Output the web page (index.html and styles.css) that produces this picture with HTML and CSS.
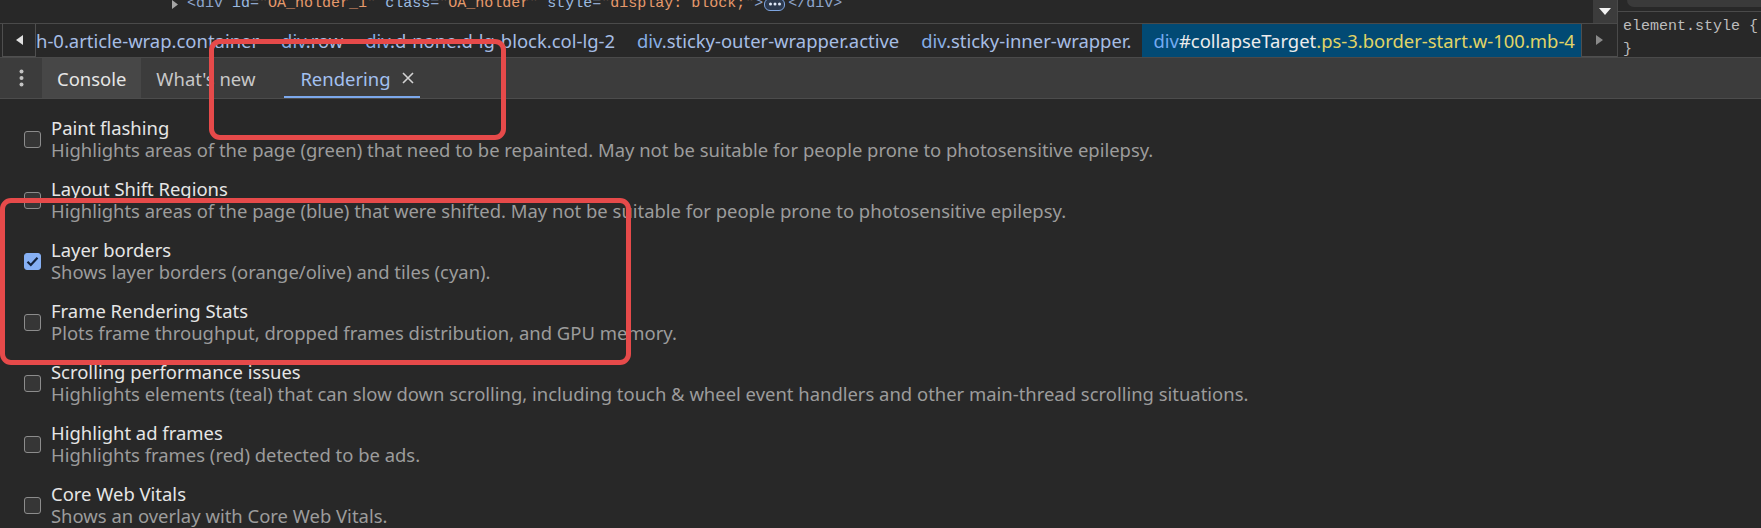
FILE: index.html
```html
<!DOCTYPE html>
<html>
<head>
<meta charset="utf-8">
<link rel="stylesheet" href="styles.css">
</head>
<body>
<div class="screen">
  <div class="top">
    <div class="elements">
      <div class="codeline">
        <div class="code">
          <svg class="tri" width="8" height="9" viewBox="0 0 8 9"><path d="M1 0 L7 4.5 L1 9 Z" fill="#a6a6a6"/></svg>
          <span class="tag">&lt;div</span>&nbsp;<span class="attr">id</span><span class="tag">=</span><span class="q">"</span><span class="val">OA_holder_1</span><span class="q">"</span>&nbsp;<span class="attr">class</span><span class="tag">=</span><span class="q">"</span><span class="val">OA_holder</span><span class="q">"</span>&nbsp;<span class="attr">style</span><span class="tag">=</span><span class="q">"</span><span class="val">display:&nbsp;block;</span><span class="q">"</span><span class="tag">&gt;</span><span class="badge"><svg width="14" height="6" viewBox="0 0 14 6"><circle cx="2.5" cy="3" r="1.5" fill="#dfe8f8"/><circle cx="7" cy="3" r="1.5" fill="#dfe8f8"/><circle cx="11.5" cy="3" r="1.5" fill="#dfe8f8"/></svg></span><span class="tag">&lt;/div&gt;</span>
        </div>
        <div class="dd"><svg width="12" height="8" viewBox="0 0 12 8"><path d="M0 0 L12 0 L6 7 Z" fill="#f2f2f2"/></svg></div>
      </div>
      <div class="crumbs">
        <div class="cbtn"><svg width="7" height="10" viewBox="0 0 7 10"><path d="M7 0 L0 5 L7 10 Z" fill="#e0e0e0"/></svg></div>
        <div class="clist">
          <span class="crumb first"><span class="cls">h-0.article-wrap.container</span></span>
          <span class="crumb"><span class="tn">div</span><span class="cls">.row</span></span>
          <span class="crumb"><span class="tn">div</span><span class="cls">.d-none.d-lg-block.col-lg-2</span></span>
          <span class="crumb"><span class="tn">div</span><span class="cls">.sticky-outer-wrapper.active</span></span>
          <span class="crumb"><span class="tn">div</span><span class="cls">.sticky-inner-wrapper.</span></span>
          <span class="crumb sel"><span class="tn">div</span><span class="id">#collapseTarget</span><span class="ycls">.ps-3.border-start.w-100.mb-4</span></span>
        </div>
        <div class="cbtn"><svg width="7" height="10" viewBox="0 0 7 10"><path d="M0 0 L7 5 L0 10 Z" fill="#8a8a8a"/></svg></div>
      </div>
    </div>
    <div class="styles">
      <div class="filter-row"><div class="filter"></div></div>
      <div class="rule"><div>element.style {</div><div>}</div></div>
    </div>
  </div>

  <div class="tabbar">
    <div class="kebab"><svg width="5" height="18" viewBox="0 0 5 18"><circle cx="2.5" cy="2.5" r="2" fill="#c4c4c4"/><circle cx="2.5" cy="9" r="2" fill="#c4c4c4"/><circle cx="2.5" cy="15.5" r="2" fill="#c4c4c4"/></svg></div>
    <div class="tab hover">Console</div>
    <div class="tab closable"><span>What's new</span><span class="xspace"></span></div>
    <div class="tab closable active"><span>Rendering</span><svg class="x" width="14" height="14" viewBox="0 0 14 14"><path d="M2 2 L12 12 M12 2 L2 12" stroke="#d2d2d2" stroke-width="1.6"/></svg></div>
  </div>

  <div class="content">
    <div class="row">
      <span class="cb"></span>
      <div class="txt"><div class="title">Paint flashing</div><div class="desc">Highlights areas of the page (green) that need to be repainted. May not be suitable for people prone to photosensitive epilepsy.</div></div>
    </div>
    <div class="row">
      <span class="cb"></span>
      <div class="txt"><div class="title">Layout Shift Regions</div><div class="desc">Highlights areas of the page (blue) that were shifted. May not be suitable for people prone to photosensitive epilepsy.</div></div>
    </div>
    <div class="row">
      <span class="cb checked"><svg width="13" height="11" viewBox="0 0 13 11"><path d="M1.5 5.8 L4.8 9 L11.5 1.8" fill="none" stroke="#13233d" stroke-width="2.2"/></svg></span>
      <div class="txt"><div class="title">Layer borders</div><div class="desc">Shows layer borders (orange/olive) and tiles (cyan).</div></div>
    </div>
    <div class="row">
      <span class="cb"></span>
      <div class="txt"><div class="title">Frame Rendering Stats</div><div class="desc">Plots frame throughput, dropped frames distribution, and GPU memory.</div></div>
    </div>
    <div class="row">
      <span class="cb"></span>
      <div class="txt"><div class="title">Scrolling performance issues</div><div class="desc">Highlights elements (teal) that can slow down scrolling, including touch &amp; wheel event handlers and other main-thread scrolling situations.</div></div>
    </div>
    <div class="row">
      <span class="cb"></span>
      <div class="txt"><div class="title">Highlight ad frames</div><div class="desc">Highlights frames (red) detected to be ads.</div></div>
    </div>
    <div class="row">
      <span class="cb"></span>
      <div class="txt"><div class="title">Core Web Vitals</div><div class="desc">Shows an overlay with Core Web Vitals.</div></div>
    </div>
  </div>

  <div class="mark mark1"></div>
  <div class="mark mark2"></div>
</div>
</body>
</html>
```

FILE: styles.css
```css
* { box-sizing: border-box; }
html, body { margin: 0; padding: 0; }
body {
  background: #282828;
  font-family: "Noto Sans", "Liberation Sans", sans-serif;
  font-size: 18.45px;
  color: #e3e3e3;
}
.screen {
  position: relative;
  width: 1761px;
  height: 528px;
  overflow: hidden;
  background: #282828;
}

/* ---------- top (elements + styles) ---------- */
.top {
  display: flex;
  height: 58px;
  border-bottom: 1px solid #4a4a4a;
}
.elements {
  width: 1617px;
  display: flex;
  flex-direction: column;
}
.codeline {
  height: 23px;
  display: flex;
  overflow: hidden;
}
.code {
  flex: 1;
  font-family: "Liberation Mono", monospace;
  font-size: 15px;
  line-height: 18px;
  margin-top: -5px;
  padding-left: 171px;
  white-space: nowrap;
  color: #9aa9c4;
  display: flex;
  align-items: center;
  height: 18px;
}
.code .tri { margin-right: 8px; margin-top: 1px; }
.tag { color: #8fa6cc; }
.attr { color: #9cbbe0; }
.val { color: #e69a6c; }
.q { color: #5b4a40; }
.badge {
  display: inline-flex;
  align-items: center;
  justify-content: center;
  width: 21px;
  height: 13px;
  border: 1px solid #7ea5e0;
  border-radius: 6px;
  margin: 0 3px 0 1px;
  background: #2d3a4f;
}
.dd {
  width: 24px;
  height: 23px;
  background: #3c3c3c;
  display: flex;
  align-items: center;
  justify-content: center;
}
.crumbs {
  height: 35px;
  border-top: 1px solid #4a4a4a;
  display: flex;
}
.cbtn {
  width: 34px;
  border: 1px solid #4f4f4f;
  border-top: none;
  display: flex;
  align-items: center;
  justify-content: center;
  background: #282828;
}
.crumbs .cbtn:first-child { margin-left: 2px; }
.crumbs .cbtn:last-child { width: 36px; border-right: none; background: #2a2a2a; }
.clist {
  flex: 1;
  display: flex;
  overflow: hidden;
  white-space: nowrap;
  line-height: 33px;
}
.crumb {
  padding: 0 11px;
  flex: none;
  color: #a6bde4;
}
.crumb.first { padding-left: 0; }
.crumb .tn { color: #86aee6; }
.crumb .cls { color: #a6bde4; }
.crumb.sel { background: #024a74; }
.crumb.sel .tn { color: #74abf2; }
.crumb.sel .id { color: #ececec; }
.crumb.sel .ycls { color: #e1d466; }

.styles {
  flex: 1;
  border-left: 1px solid #4a4a4a;
  display: flex;
  flex-direction: column;
  overflow: hidden;
}
.filter-row {
  height: 12px;
  flex: none;
  border-bottom: 1px solid #4a4a4a;
  padding-left: 9px;
}
.filter {
  height: 7px;
  background: #3a3a3a;
  border-radius: 0 0 0 10px;
}
.rule {
  font-family: "Liberation Mono", monospace;
  font-size: 15px;
  line-height: 23px;
  padding-top: 3px;
  color: #bdbdbd;
  padding-left: 5px;
  white-space: nowrap;
}

/* ---------- tab bar ---------- */
.tabbar {
  height: 41px;
  background: #3c3c3c;
  border-bottom: 1px solid #4c4c4c;
  display: flex;
  align-items: stretch;
}
.kebab {
  width: 42px;
  display: flex;
  align-items: center;
  padding-left: 19px;
}
.tab {
  display: flex;
  align-items: center;
  padding: 0 15px;
  color: #c8c8c8;
  white-space: nowrap;
}
.tab.hover { background: #474747; color: #e6e6e6; padding-right: 15px; }
.tab.closable { padding: 0 7px 0 15px; }
.tab .xspace { width: 14px; margin-left: 8px; }
.tab .x { margin-left: 10px; }
.tab.active { color: #a3c0f0; padding: 0 5px 0 16px; box-shadow: inset 0 -2px 0 #7ca8ec; }

/* ---------- content ---------- */
.content {
  padding-top: 18px;
  display: flex;
  flex-direction: column;
  gap: 17px;
}
.row {
  display: flex;
  align-items: center;
  padding-left: 24px;
  gap: 10px;
}
.cb {
  width: 17px;
  height: 17px;
  border: 1.5px solid #8c8c8c;
  border-radius: 3px;
  background: #363636;
  flex: none;
  display: flex;
  align-items: center;
  justify-content: center;
}
.cb.checked { background: #86b0f4; border-color: #86b0f4; }
.txt { line-height: 22px; white-space: nowrap; }
.title { color: #e6e6e6; }
.desc { color: #9c9c9c; }

/* ---------- annotation boxes ---------- */
.mark {
  position: absolute;
  border: 5px solid #e64a4a;
  border-radius: 11px;
  pointer-events: none;
}
.mark1 { left: 209px; top: 39px; width: 297px; height: 101px; }
.mark2 { left: 0px; top: 198px; width: 631px; height: 167px; }
```
